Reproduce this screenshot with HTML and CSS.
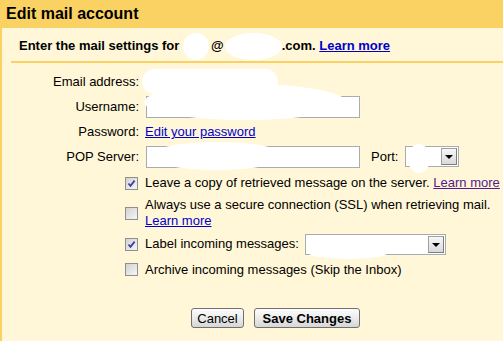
FILE: index.html
```html
<!DOCTYPE html>
<html lang="en">
<head>
    <meta charset="UTF-8">
    <meta name="viewport" content="width=device-width, initial-scale=1.0">
    <title>Edit mail account</title>
    <link rel="stylesheet" href="styles.css">
</head>
<body>
    <div class="header">Edit mail account</div>
    <div class="panel">
        <div class="intro">
            Enter the mail settings for <span class="blot blot-name"></span>@<span class="blot blot-domain"></span>.com. <a href="#">Learn more</a>
        </div>

        <div class="form">
            <label>Email address:</label>
            <div class="field"><span class="blot blot-email"></span></div>

            <label>Username:</label>
            <div class="field"><span class="text-input"></span></div>

            <label>Password:</label>
            <div class="field"><a href="#">Edit your password</a></div>

            <label>POP Server:</label>
            <div class="field">
                <span class="text-input"></span>
                <span class="port-label">Port:</span>
                <span class="select port-select"><span class="arrow"></span></span>
            </div>
        </div>

        <div class="options">
            <span class="check on"><svg width="11" height="11" viewBox="0 0 11 11"><path d="M2.5 5.5 L4.5 7.8 L8.6 2.6" fill="none" stroke="#3a3f9e" stroke-width="1.7"/></svg></span>
            <div class="opt-text">Leave a copy of retrieved message on the server. <a href="#" class="visited">Learn more</a></div>

            <span class="check"></span>
            <div class="opt-text">Always use a secure connection (SSL) when retrieving mail.<br><a href="#">Learn more</a></div>

            <span class="check on"><svg width="11" height="11" viewBox="0 0 11 11"><path d="M2.5 5.5 L4.5 7.8 L8.6 2.6" fill="none" stroke="#3a3f9e" stroke-width="1.7"/></svg></span>
            <div class="opt-text">Label incoming messages: <span class="select label-select"><span class="arrow"></span></span></div>

            <span class="check"></span>
            <div class="opt-text">Archive incoming messages (Skip the Inbox)</div>
        </div>

        <div class="actions">
            <button class="btn cancel">Cancel</button>
            <button class="btn save">Save Changes</button>
        </div>
    </div>

    <!-- redaction marks over the private values -->
    <div class="blot blot-user"></div>
    <div class="blot blot-pop"></div>
    <div class="blot blot-port"></div>
    <div class="blot blot-label"></div>
</body>
</html>
```

FILE: styles.css
```css
body {
    margin: 0;
    background-color: #fff7d7;
    font-family: "Liberation Sans", Arial, sans-serif;
    font-size: 13px;
    color: #000;
    height: 341px;
    overflow: hidden;
}
a {
    color: #0000cc;
}
a.visited {
    color: #551a8b;
}
.header {
    background-color: #fad163;
    height: 28px;
    line-height: 28px;
    padding-left: 6px;
    font-size: 16px;
    font-weight: bold;
}
.panel {
    border-left: 2px solid #fad163;
    height: 313px;
}
.intro {
    margin-left: 9px;
    padding: 10px 0 7px 8px;
    line-height: 16px;
    font-weight: bold;
    border-bottom: 2px solid #fad163;
}
.blot {
    display: inline-block;
    background-color: #fff;
    border-radius: 50%;
}
.blot-name {
    width: 26px;
    height: 27px;
    margin: -6px 2px -6px 0;
    vertical-align: middle;
}
.blot-domain {
    width: 57px;
    height: 27px;
    margin: -6px 0 -6px 1px;
    vertical-align: middle;
}
.blot-email {
    width: 136px;
    height: 25px;
    margin-left: -3px;
    border-radius: 13px;
}
.form {
    display: grid;
    grid-template-columns: 137px 1fr;
    grid-auto-rows: 25px;
    column-gap: 6px;
    align-items: center;
    margin-top: 6px;
}
.form label {
    text-align: right;
}
.field {
    display: flex;
    align-items: center;
}
.text-input {
    display: inline-block;
    box-sizing: border-box;
    width: 214px;
    height: 22px;
    margin-left: 1px;
    background-color: #fff;
    border: 1px solid #a5acb2;
}
.port-label {
    margin-left: 11px;
}
.select {
    display: inline-flex;
    justify-content: flex-end;
    box-sizing: border-box;
    height: 21px;
    padding: 1px;
    background-color: #fff;
    border: 1px solid #a5acb2;
    vertical-align: middle;
}
.port-select {
    width: 54px;
    margin-left: 7px;
}
.label-select {
    width: 141px;
    margin-left: 2px;
}
.arrow {
    box-sizing: border-box;
    width: 16px;
    height: 17px;
    border: 1px solid #a0a0a0;
    border-right-color: #7e7e7e;
    border-bottom-color: #7e7e7e;
    background: linear-gradient(#f7f7f7, #d9d9d9);
    position: relative;
}
.arrow::after {
    content: "";
    position: absolute;
    left: 3px;
    top: 6px;
    border-left: 4px solid transparent;
    border-right: 4px solid transparent;
    border-top: 4px solid #000;
}
.options {
    display: grid;
    grid-template-columns: 137px 1fr;
    grid-template-rows: 22px 38px 25px 25px;
    column-gap: 6px;
    align-items: center;
    margin-top: 3px;
    line-height: 16px;
}
.check {
    justify-self: end;
    margin-right: 1px;
    box-sizing: border-box;
    width: 13px;
    height: 13px;
    border: 1px solid #8e8f8f;
    background: linear-gradient(135deg, #d2d2d2, #f6f6f6);
    display: flex;
}
.opt-text {
    white-space: nowrap;
}
.actions {
    display: flex;
    gap: 10px;
    padding-left: 189px;
    margin-top: 26px;
}
.btn {
    box-sizing: border-box;
    height: 20px;
    padding: 0;
    font-family: "Liberation Sans", Arial, sans-serif;
    font-size: 13px;
    color: #000;
    border: 1px solid #707070;
    border-radius: 3px;
    background: linear-gradient(#fdfdfd, #ececec 50%, #d6d6d6);
}
.cancel {
    width: 53px;
}
.save {
    width: 106px;
    font-weight: bold;
}
.blot-user {
    position: absolute;
    left: 144px;
    top: 84px;
    width: 202px;
    height: 36px;
    border-radius: 50%;
}
.blot-pop {
    position: absolute;
    left: 150px;
    top: 142px;
    width: 134px;
    height: 28px;
    border-radius: 50%;
}
.blot-port {
    position: absolute;
    left: 408px;
    top: 144px;
    width: 22px;
    height: 29px;
    border-radius: 50%;
}
.blot-label {
    position: absolute;
    left: 308px;
    top: 246px;
    width: 80px;
    height: 13px;
    border-radius: 50%;
}
```
